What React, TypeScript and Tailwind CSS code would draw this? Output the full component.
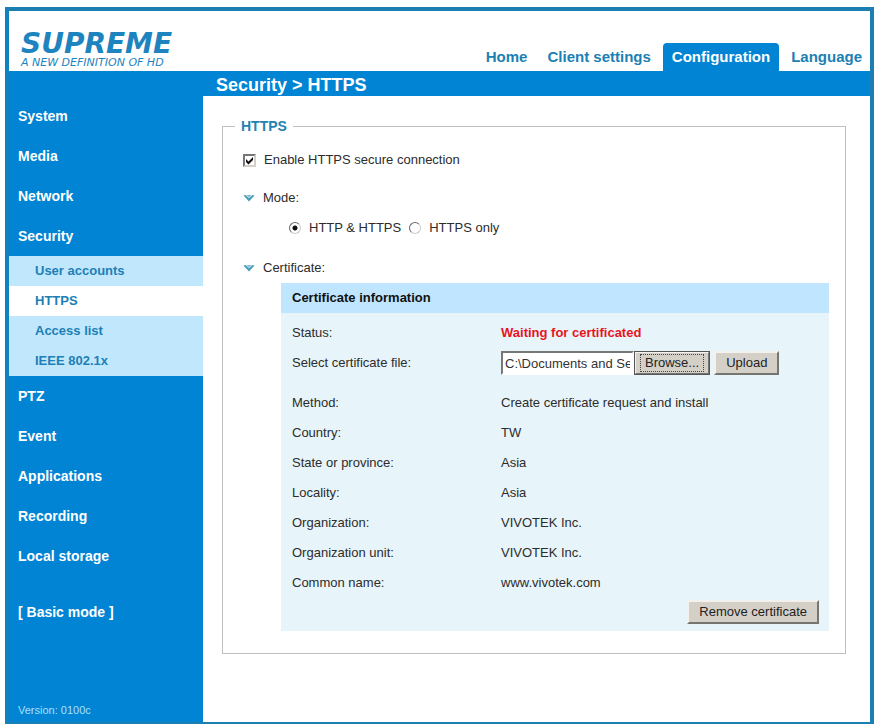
import React, { useState } from 'react';

const SUB_ITEMS = ['User accounts', 'HTTPS', 'Access list', 'IEEE 802.1x'];

const DETAILS = [
  ['Method:', 'Create certificate request and install'],
  ['Country:', 'TW'],
  ['State or province:', 'Asia'],
  ['Locality:', 'Asia'],
  ['Organization:', 'VIVOTEK Inc.'],
  ['Organization unit:', 'VIVOTEK Inc.'],
  ['Common name:', 'www.vivotek.com'],
];

const Logo: React.FC = () => (
  <a
    href="#home"
    className="flex flex-col pt-5 pl-3 font-['DejaVu_Sans',sans-serif] italic text-[#1d84bf]"
  >
    <span className="text-[28px] leading-[26px] font-bold">SUPREME</span>
    <span className="text-[11px] leading-3 whitespace-nowrap">A NEW DEFINITION OF HD</span>
  </a>
);

const SideItem: React.FC<{ label: string }> = ({ label }) => (
  <a href="#menu" className="flex h-10 items-center pl-[9px] text-sm font-bold text-white">
    {label}
  </a>
);

const ToggleIcon: React.FC = () => (
  <svg width="12" height="8" viewBox="0 0 12 8" className="shrink-0" aria-hidden="true">
    <path d="M0.5 1.5 L2.5 1 L6 4 L9.5 1 L11.5 1.5 L6 7.5 Z" fill="#4a9fb8" />
    <path d="M3.4 1 L8.6 1 L6 3.4 Z" fill="#7fbccd" />
  </svg>
);

interface ClassicButtonProps {
  children: React.ReactNode;
  focused?: boolean;
}

const ClassicButton: React.FC<ClassicButtonProps> = ({ children, focused }) => (
  <button
    type="button"
    className={`h-6 border-2 border-t-[#f4f2ee] border-l-[#f4f2ee] border-r-[#77756f] border-b-[#77756f] bg-[#d4d0c8] text-[13px] leading-4 whitespace-nowrap text-[#222] ${
      focused ? 'px-1 outline-1 -outline-offset-1 outline-[#555]' : 'px-[10px]'
    }`}
  >
    {focused ? (
      <span className="block border border-dotted border-[#444] px-1 leading-4">{children}</span>
    ) : (
      children
    )}
  </button>
);

interface ModeOptionProps {
  label: string;
  checked: boolean;
  onChange: () => void;
}

const ModeOption: React.FC<ModeOptionProps> = ({ label, checked, onChange }) => (
  <label className="flex items-center gap-2">
    <input
      type="radio"
      name="mode"
      checked={checked}
      onChange={onChange}
      className="size-3 appearance-none rounded-full border border-t-[#666] border-l-[#666] border-r-[#ccc] border-b-[#ccc] bg-white checked:bg-[radial-gradient(circle,#111_2px,white_3px)]"
    />
    {label}
  </label>
);

const App: React.FC = () => {
  const [enabled, setEnabled] = useState(true);
  const [mode, setMode] = useState('both');

  return (
    <div className="flex min-h-screen bg-white pt-[7px] pr-[5px] pl-[5px] font-['Liberation_Sans',Arial,sans-serif] text-[13px] text-[#2c2c2c]">
      <div className="flex grow flex-col border-4 border-b-2 border-[#1c7fb2] border-l-[#0f82c2]">
        <header className="flex h-[60px] justify-between">
          <Logo />
          <nav className="flex items-end text-[15px] font-bold text-[#1b80b4]">
            <a href="#home" className="flex h-7 items-center px-[10px]">Home</a>
            <a href="#client" className="flex h-7 items-center pr-3 pl-[10px]">Client settings</a>
            <a href="#config" className="flex h-7 items-center rounded-t bg-[#0084d3] px-[9px] text-white">
              Configuration
            </a>
            <a href="#language" className="flex h-7 items-center pr-2 pl-3">Language</a>
          </nav>
        </header>

        <div className="flex grow bg-[#0084d3]">
          <aside className="flex w-[194px] shrink-0 flex-col pt-[25px]">
            <SideItem label="System" />
            <SideItem label="Media" />
            <SideItem label="Network" />
            <SideItem label="Security" />
            <div className="bg-[#c1e7fd] font-bold text-[#1c80b6]">
              {SUB_ITEMS.map((item) => (
                <a
                  key={item}
                  href="#security"
                  className={`flex h-[30px] items-center pl-[26px] ${item === 'HTTPS' ? 'bg-white' : ''}`}
                >
                  {item}
                </a>
              ))}
            </div>
            <SideItem label="PTZ" />
            <SideItem label="Event" />
            <SideItem label="Applications" />
            <SideItem label="Recording" />
            <SideItem label="Local storage" />
            <div className="pt-4">
              <SideItem label="[ Basic mode ]" />
            </div>
            <p className="mt-auto pb-1 pl-[9px] text-[11px] leading-4 text-[#a8e0fb]">Version: 0100c</p>
          </aside>

          <main className="flex min-w-0 grow flex-col">
            <h1 className="h-[25px] pl-[13px] text-lg leading-7 font-bold text-white">Security &gt; HTTPS</h1>
            <div className="grow bg-white pt-5 pr-6 pb-5 pl-[19px]">
              <fieldset className="border border-[#c0c0c0] pr-4 pb-[22px] pl-5">
                <legend className="-ml-2 px-[6px] text-sm leading-5 font-bold text-[#2482b0]">HTTPS</legend>

                <label className="mt-2 flex h-8 items-center gap-2">
                  <span className="relative flex">
                    <input
                      type="checkbox"
                      checked={enabled}
                      onChange={(e) => setEnabled(e.target.checked)}
                      className="size-[13px] appearance-none border-2 border-t-[#777] border-l-[#777] border-r-[#d4d0c8] border-b-[#d4d0c8] bg-white"
                    />
                    {enabled && (
                      <svg viewBox="0 0 13 13" className="pointer-events-none absolute inset-0" aria-hidden="true">
                        <path d="M3 5 L5.5 7.5 L10 3 L10 6 L5.5 10.5 L3 8 Z" fill="#111" />
                      </svg>
                    )}
                  </span>
                  Enable HTTPS secure connection
                </label>

                <div className="mt-3 flex h-5 items-center gap-2">
                  <ToggleIcon />
                  Mode:
                </div>
                <div className="mt-[10px] flex h-5 gap-2 pl-[46px]">
                  <ModeOption label="HTTP & HTTPS" checked={mode === 'both'} onChange={() => setMode('both')} />
                  <ModeOption label="HTTPS only" checked={mode === 'only'} onChange={() => setMode('only')} />
                </div>
                <div className="mt-5 flex h-5 items-center gap-2">
                  <ToggleIcon />
                  Certificate:
                </div>

                <div className="mt-[5px] ml-[38px] bg-[#e7f4f9] pb-[7px]">
                  <table className="w-full text-left">
                    <thead className="bg-[#bfe6fe] text-[#111]">
                      <tr className="h-[30px]">
                        <th colSpan={2} className="pl-[11px] font-bold">Certificate information</th>
                      </tr>
                    </thead>
                    <tbody>
                      <tr className="h-[5px]" />
                      <tr className="h-[30px]">
                        <th scope="row" className="w-[220px] pl-[11px] font-normal">Status:</th>
                        <td className="font-bold text-[#e8151f]">Waiting for certificated</td>
                      </tr>
                      <tr className="h-[30px]">
                        <th scope="row" className="pl-[11px] font-normal">
                          <label htmlFor="certFile">Select certificate file:</label>
                        </th>
                        <td>
                          <div className="flex items-center">
                            <input
                              id="certFile"
                              type="text"
                              defaultValue="C:\Documents and Settings"
                              className="h-6 w-[133px] border-2 border-t-[#777] border-l-[#777] border-r-white border-b-white bg-white px-[2px] text-[#333]"
                            />
                            <div className="flex gap-1">
                              <ClassicButton focused>Browse...</ClassicButton>
                              <ClassicButton>Upload</ClassicButton>
                            </div>
                          </div>
                        </td>
                      </tr>
                      <tr className="h-[10px]" />
                      {DETAILS.map(([label, value]) => (
                        <tr key={label} className="h-[30px]">
                          <th scope="row" className="pl-[11px] font-normal">{label}</th>
                          <td>{value}</td>
                        </tr>
                      ))}
                    </tbody>
                  </table>
                  <div className="flex justify-end pt-[2px] pr-[10px]">
                    <ClassicButton>Remove certificate</ClassicButton>
                  </div>
                </div>
              </fieldset>
            </div>
          </main>
        </div>
      </div>
    </div>
  );
};

export default App;
